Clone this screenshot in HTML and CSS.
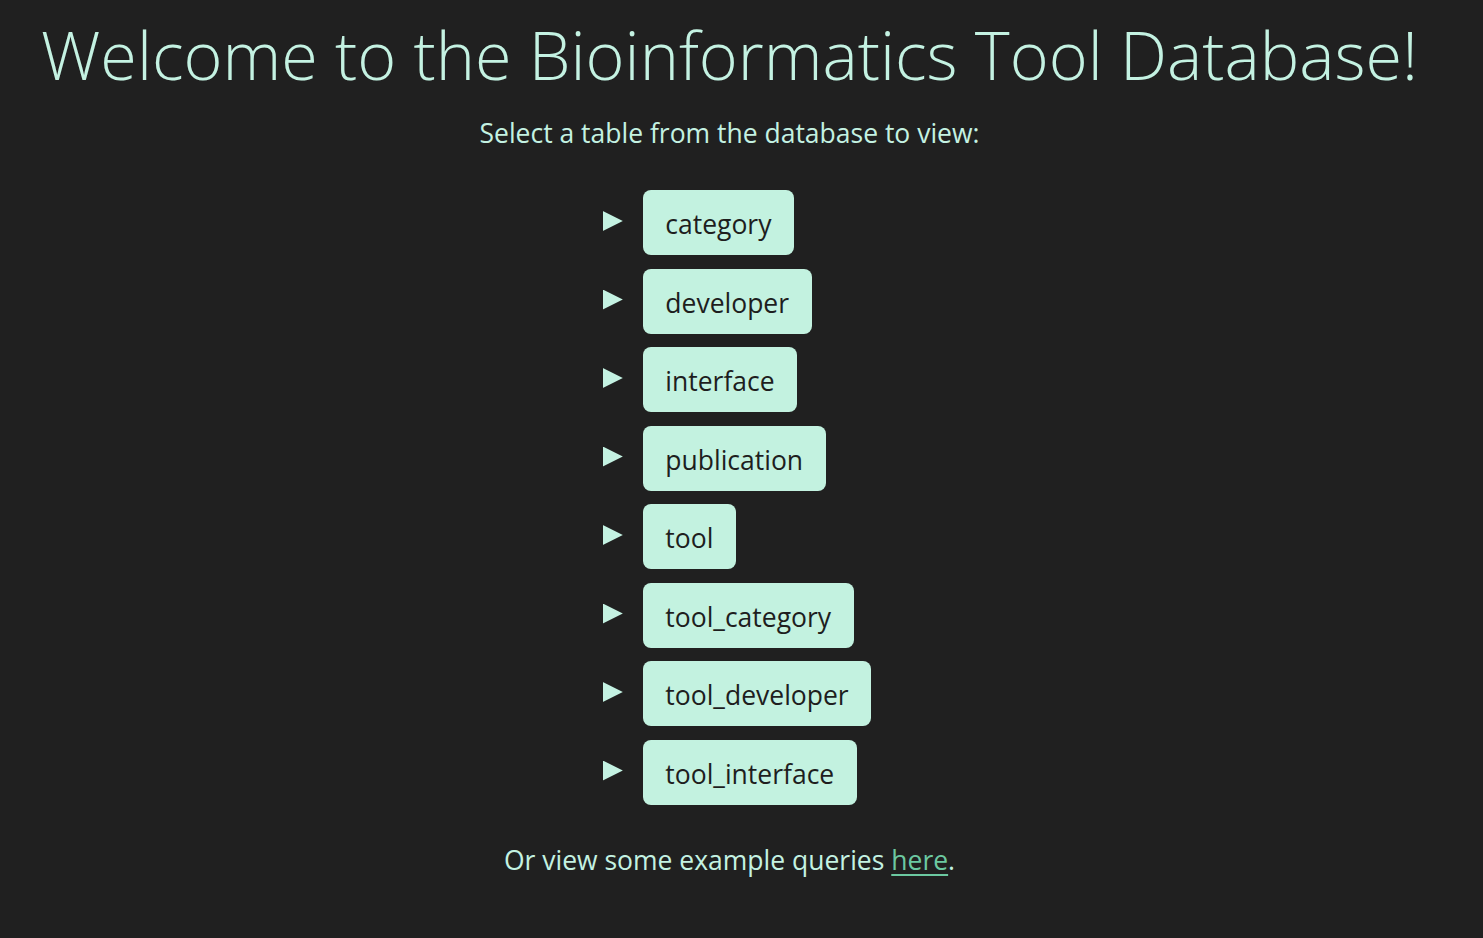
FILE: index.html
```html
<!DOCTYPE html>
<html lang="en">
<head>
<meta charset="utf-8">
<title>Bioinformatics Tool Database</title>
<link rel="stylesheet" href="styles.css">
</head>
<body>
<main class="page">
  <h1 class="title">Welcome to the Bioinformatics Tool Database!</h1>
  <p class="lead">Select a table from the database to view:</p>
  <ul class="tables">
    <li class="table-item"><a class="table-btn" href="#">category</a></li>
    <li class="table-item"><a class="table-btn" href="#">developer</a></li>
    <li class="table-item"><a class="table-btn" href="#">interface</a></li>
    <li class="table-item"><a class="table-btn" href="#">publication</a></li>
    <li class="table-item"><a class="table-btn" href="#">tool</a></li>
    <li class="table-item"><a class="table-btn" href="#">tool_category</a></li>
    <li class="table-item"><a class="table-btn" href="#">tool_developer</a></li>
    <li class="table-item"><a class="table-btn" href="#">tool_interface</a></li>
  </ul>
  <p class="footer">Or view some example queries <a class="link" href="#">here</a>.</p>
</main>
</body>
</html>
```
FILE: styles.css
```css
html, body {
  margin: 0;
  padding: 0;
  background: #202020;
}
body {
  color: #c4f2e2;
  font-family: "Open Sans", "Noto Sans", "DejaVu Sans", sans-serif;
}
.page {
  padding: 0 24px 0 0;
  text-align: center;
}
.title {
  margin: 0;
  padding-top: 10px;
  font-size: 66.5px;
  font-weight: 350;
  line-height: 88px;
}
.lead {
  margin: 17px 0 0;
  font-size: 26.5px;
  line-height: 36px;
}
.tables {
  list-style: none;
  margin: 39px auto 0;
  padding: 0 0 0 15px;
  width: fit-content;
  display: flex;
  flex-direction: column;
  gap: 13.5px;
  text-align: left;
}
.table-item {
  display: flex;
  align-items: center;
  gap: 20px;
}
.table-item::before {
  content: "";
  width: 20px;
  height: 20px;
  background: #c4f2e2;
  clip-path: polygon(0 0, 100% 50%, 0 100%);
  margin-top: -3px;
}
.table-btn {
  display: block;
  height: 65px;
  box-sizing: border-box;
  padding: 0 22.5px;
  line-height: 68px;
  background: #c3f2e0;
  color: #1e1e1e;
  border-radius: 8px;
  font-size: 26.5px;
  text-decoration: none;
}
.footer {
  margin: 37px 0 0;
  font-size: 26.5px;
  line-height: 36px;
}
.link {
  color: #6cc9a1;
  text-decoration: underline;
  text-underline-offset: 4px;
}
```
